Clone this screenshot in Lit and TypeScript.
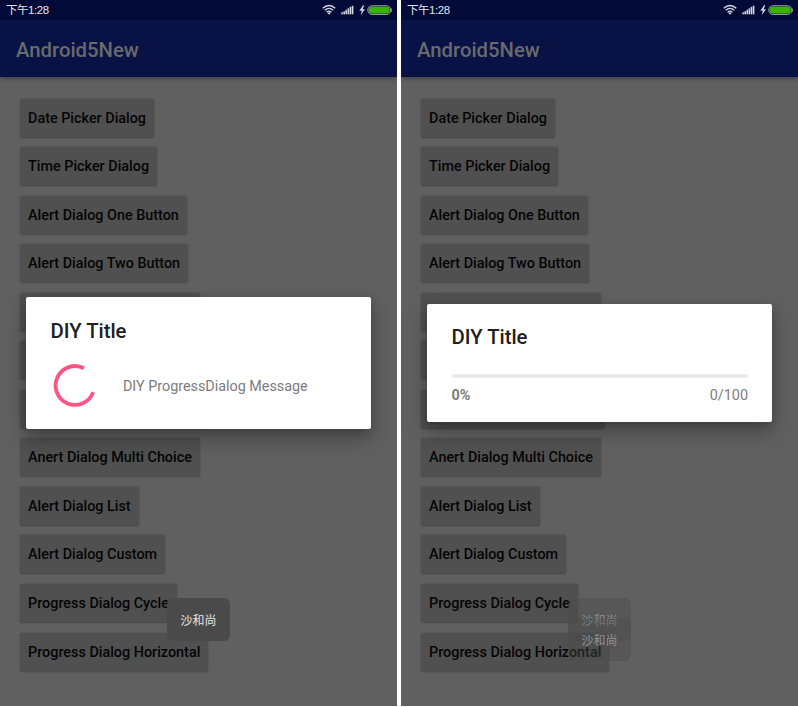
import { LitElement, html, css, svg } from "lit";
import { customElement, property } from "lit/decorators.js";
import { styleMap } from "lit/directives/style-map.js";

interface ListButton {
  label: string;
  width?: number;
}

// The three unlabelled buttons lie behind the dialog and carry only a width.
const BUTTONS: ListButton[] = [
  { label: "Date Picker Dialog" },
  { label: "Time Picker Dialog" },
  { label: "Alert Dialog One Button" },
  { label: "Alert Dialog Two Button" },
  { label: "", width: 179.5 },
  { label: "", width: 166 },
  { label: "", width: 184 },
  { label: "Anert Dialog Multi Choice" },
  { label: "Alert Dialog List" },
  { label: "Alert Dialog Custom" },
  { label: "Progress Dialog Cycle" },
  { label: "Progress Dialog Horizontal" },
];

@customElement("phone-status-bar")
class PhoneStatusBar extends LitElement {
  static styles = css`
    :host {
      display: flex;
      align-items: center;
      justify-content: space-between;
      box-sizing: border-box;
      height: 20px;
      padding: 0 3px 0 6px;
      background: #020a37;
      color: #e4e5ec;
      font: 11.5px/20px "Liberation Sans", "Noto Sans CJK SC", sans-serif;
    }
    .time {
      letter-spacing: -0.45px;
    }
    svg {
      display: block;
    }
  `;
  render() {
    const bars = [2, 3, 4.5, 6, 7.5, 8.5];
    return html`<span class="time">下午1:28</span>
      <svg width="72" height="20" viewBox="0 0 72 20">
        <g fill="none" stroke="#d5d6df" stroke-width="1.3">
          <path d="M0.7 8.3Q7 2.8 13.3 8.3" />
          <path d="M2.7 10.3Q7 6.5 11.3 10.3" />
          <path d="M4.6 12.2Q7 10.1 9.4 12.2" />
        </g>
        <path d="M5.2 12.8Q7 11.5 8.8 12.8L7 14.8Z" fill="#d5d6df" />
        ${bars.map((h, i) => svg`<rect x=${19.3 + i * 2.1} y=${14.3 - h} width="1.6" height=${h} fill="#d5d6df" />`)}
        <path d="M41 5.3L37.4 10.8H39.9L38.6 15.2L43 9.2H40.6L42.2 5.3Z" fill="#d5d6df" />
        <rect x="45.8" y="5.8" width="23" height="8.6" rx="4.3" fill="#101b35" stroke="#a8abb9" />
        <rect x="46.8" y="6.7" width="21" height="6.8" rx="3.4" fill="#39b300" />
        <path d="M69.4 8.5v3.4" stroke="#a8abb9" stroke-width="0.8" />
      </svg>`;
  }
}

@customElement("phone-screen")
class PhoneScreen extends LitElement {
  @property() mode = "spinner";
  static styles = css`
    :host {
      display: block;
      position: relative;
      box-sizing: border-box;
      width: 397px;
      height: 706px;
      overflow: hidden;
      background: #606060;
      font-family: Roboto, "Noto Sans CJK SC", sans-serif;
    }
    .appbar {
      display: flex;
      align-items: center;
      box-sizing: border-box;
      height: 57px;
      padding: 2px 0 0 16px;
      background: #081244;
      color: #696a6b;
      font-size: 20.3px;
      font-weight: 500;
      box-shadow: 0 2px 4px rgba(0, 0, 0, 0.3);
    }
    .list {
      display: flex;
      flex-direction: column;
      align-items: flex-start;
      gap: 10.55px;
      padding: 21.5px 20px 0;
    }
    .item {
      box-sizing: border-box;
      height: 38px;
      padding: 0 8px;
      border-radius: 2px;
      background: #505050;
      color: #050505;
      font-size: 14.38px;
      font-weight: 500;
      line-height: 39.8px;
      white-space: nowrap;
      box-shadow: 0 0.5px 2px rgba(0, 0, 0, 0.28);
    }
    .dialog {
      position: absolute;
      left: 26px;
      box-sizing: border-box;
      width: 345px;
      padding: 0 24px 0 24.5px;
      border-radius: 2px;
      background: #fff;
      box-shadow: 0 9px 20px rgba(0, 0, 0, 0.3), 0 3px 8px rgba(0, 0, 0, 0.12);
    }
    .spinner {
      top: 297px;
      height: 131.5px;
    }
    .bar {
      top: 304px;
      height: 118px;
    }
    .title {
      padding-top: 21px;
      color: #202020;
      font-size: 20.3px;
      font-weight: 500;
      line-height: 26px;
    }
    .bar .title {
      line-height: 25px;
    }
    .cycle {
      display: flex;
      align-items: center;
      gap: 26px;
      margin-top: 17.5px;
      color: #7c7c7c;
      font-size: 14.35px;
    }
    .cycle svg {
      display: block;
      margin-left: 0.4px;
    }
    .track {
      height: 4px;
      margin-top: 24px;
      background: #ebebeb;
    }
    .counts {
      display: flex;
      justify-content: space-between;
      margin-top: 9px;
      color: #7c7c7c;
      font-size: 14.4px;
      line-height: 18px;
    }
    .percent {
      font-weight: 700;
    }
    .toast {
      position: absolute;
      left: 167px;
      top: 598px;
      width: 63px;
      height: 43px;
      border-radius: 6px;
      background: #4a4a4a;
      color: #e6e6e6;
      font: 12px/43px "Noto Sans CJK SC", sans-serif;
      text-align: center;
    }
    .fading {
      background: rgba(74, 74, 74, 0.4);
      color: #929292;
    }
    .second {
      top: 618px;
    }
  `;
  render() {
    return html`<phone-status-bar></phone-status-bar>
      <div class="appbar">Android5New</div>
      <div class="list">
        ${BUTTONS.map(
          (b) => html`<div class="item" style=${styleMap(b.width ? { width: `${b.width}px` } : {})}>${b.label}</div>`
        )}
      </div>
      ${this.mode === "spinner"
        ? html`<div class="toast">沙和尚</div>
            <div class="dialog spinner">
              <div class="title">DIY Title</div>
              <div class="cycle">
                <svg width="46" height="50" viewBox="0 0 46 50">
                  <path d="M33 6.3A19.4 19.4 0 1 0 42.2 30.2" fill="none" stroke="#ff5585" stroke-width="3.8" />
                </svg>
                <span>DIY ProgressDialog Message</span>
              </div>
            </div>`
        : html`<div class="toast fading">沙和尚</div>
            <div class="toast fading second">沙和尚</div>
            <div class="dialog bar">
              <div class="title">DIY Title</div>
              <div class="track"></div>
              <div class="counts"><span class="percent">0%</span><span>0/100</span></div>
            </div>`}`;
  }
}

@customElement("app-root")
class AppRoot extends LitElement {
  static styles = css`
    :host {
      display: flex;
      gap: 4px;
      width: 798px;
      height: 707px;
      overflow: hidden;
      background: #fff;
    }
  `;
  render() {
    return html`<phone-screen mode="spinner"></phone-screen><phone-screen mode="bar"></phone-screen>`;
  }
}
